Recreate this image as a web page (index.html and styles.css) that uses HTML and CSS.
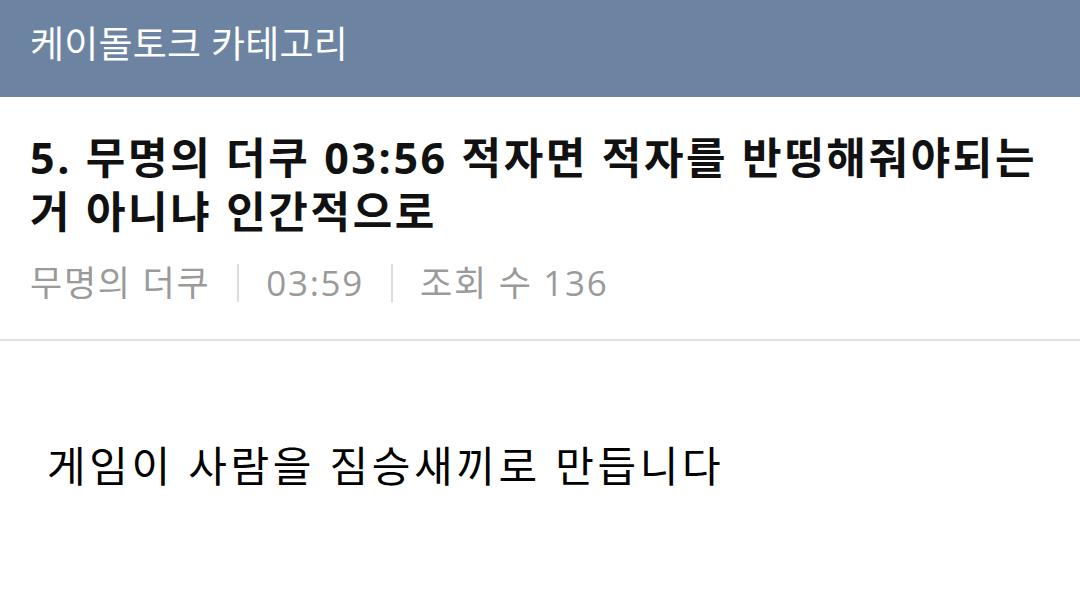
FILE: index.html
```html
<!DOCTYPE html>
<html lang="ko">
<head>
<meta charset="utf-8">
<link rel="stylesheet" href="styles.css">
</head>
<body>
<header class="topbar">케이돌토크 카테고리</header>
<section class="post-head">
  <h1 class="post-title">5. 무명의 더쿠 03:56 적자면 적자를 반띵해줘야되는 거 아니냐 인간적으로</h1>
  <div class="post-meta">
    <span>무명의 더쿠</span><span class="sep"></span><span>03:59</span><span class="sep"></span><span>조회 수 136</span>
  </div>
</section>
<article class="post-body">게임이 사람을 짐승새끼로 만듭니다</article>
</body>
</html>
```

FILE: styles.css
```css
html, body {
  margin: 0;
  padding: 0;
  background: #fff;
  font-family: "Open Sans", "Noto Sans CJK KR", sans-serif;
}
.topbar {
  height: 97px;
  box-sizing: border-box;
  background: #6c83a1;
  color: #fff;
  font-size: 37px;
  line-height: 88px;
  padding-left: 30px;
  letter-spacing: 0.2px;
}
.post-head {
  padding: 34px 30px 34px 30px;
  border-bottom: 2px solid #dedede;
}
.post-title {
  margin: 0;
  font-size: 43px;
  line-height: 54px;
  font-weight: 700;
  letter-spacing: 2.6px;
  color: #111;
  word-break: keep-all;
}
.post-meta {
  margin-top: 22px;
  font-size: 35px;
  line-height: 44px;
  letter-spacing: 1.7px;
  color: #9a9a9a;
  display: flex;
  align-items: center;
}
.sep {
  display: inline-block;
  width: 2px;
  height: 38px;
  background: #dcdcdc;
  margin: 0 27px;
}
.post-body {
  padding: 95px 47px 0 47px;
  font-size: 42px;
  line-height: 60px;
  letter-spacing: 3.6px;
  color: #000;
}
```
